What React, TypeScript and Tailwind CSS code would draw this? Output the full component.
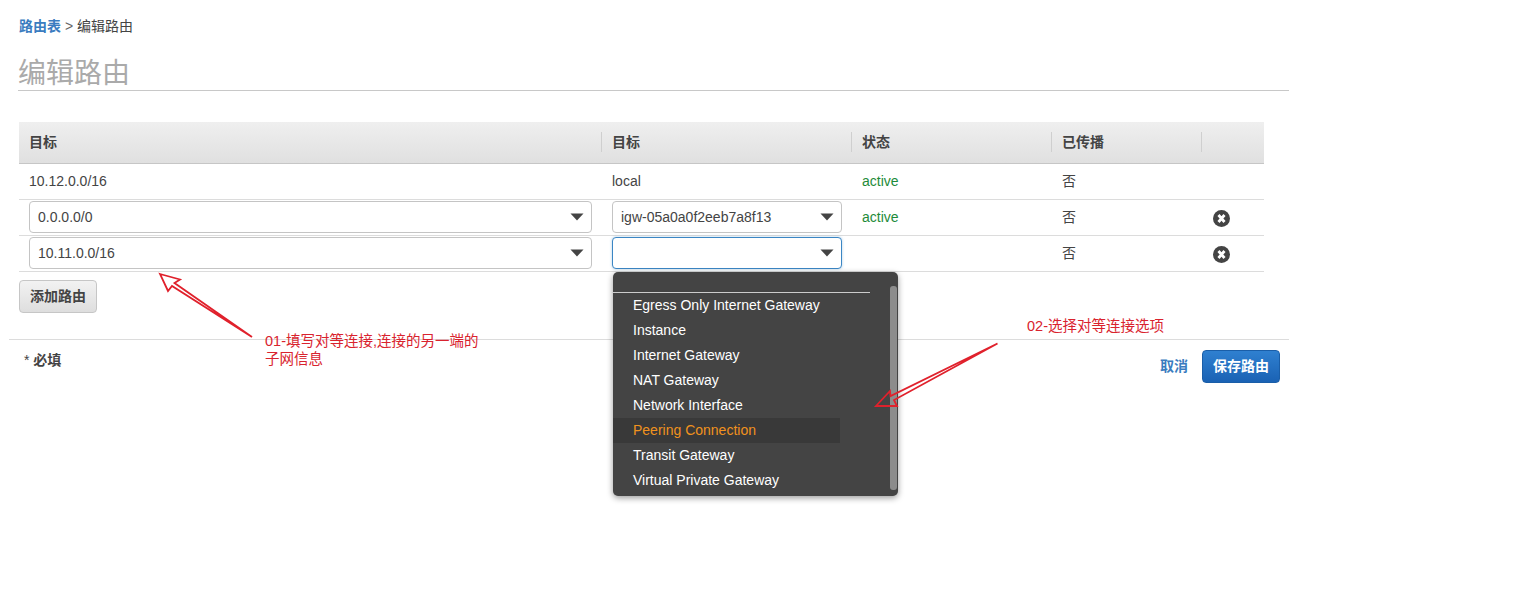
const font = { fontFamily: '"Liberation Sans", "Noto Sans CJK SC", sans-serif' };

const menuItems = [
  "Egress Only Internet Gateway",
  "Instance",
  "Internet Gateway",
  "NAT Gateway",
  "Network Interface",
  "Peering Connection",
  "Transit Gateway",
  "Virtual Private Gateway",
];

function Caret() {
  return (
    <svg width="14" height="8" viewBox="0 0 14 8" className="shrink-0">
      <path d="M0.5 0.5H13.5L7 7.5Z" fill="#444" />
    </svg>
  );
}

function RemoveIcon() {
  return (
    <svg width="17" height="17" viewBox="0 0 17 17">
      <circle cx="8.5" cy="8.5" r="8.5" fill="#444" />
      <path d="M5.5 5L11.5 12M11.5 5L5.5 12" stroke="#fff" strokeWidth="2.8" />
    </svg>
  );
}

function Select({ value, focused, className }: { value?: string; focused?: boolean; className: string }) {
  return (
    <div
      className={`h-[32px] flex items-center justify-between pl-[8px] pr-[7px] rounded-[4px] bg-white border text-[14px] text-[#444] ${
        focused ? "border-[#3b86c4] shadow-[0_0_3px_rgba(59,134,196,0.4)]" : "border-[#c4c4c4]"
      } ${className}`}
    >
      <span className="pt-[2px]">{value}</span>
      <Caret />
    </div>
  );
}

function HeaderCell({ label, divider }: { label?: string; divider?: boolean }) {
  return (
    <div className="h-full flex items-center relative pl-[10px] text-[14px] font-bold text-[#444]">
      {divider && <span className="absolute -left-px top-[10px] h-[20px] w-px bg-[#cfcfcf]" />}
      {label}
    </div>
  );
}

const rowClass =
  "grid grid-cols-[583px_250px_200px_150px_62px] h-[36px] items-center border-b border-[#dcdcdc] text-[14px] text-[#444]";

export default function App() {
  return (
    <div className="relative w-[1533px] h-[589px] overflow-hidden bg-white pl-[19px] pt-[18px]" style={font}>
      {/* Breadcrumb */}
      <div className="h-[17px] leading-[17px] text-[14px] text-[#444]">
        <span className="font-bold text-[#3a7cc0]">路由表</span>
        <span className="text-[#666]"> &gt; </span>
        <span>编辑路由</span>
      </div>

      {/* Title */}
      <h1 className="-ml-px mt-[21px] w-[1271px] h-[35px] leading-[36px] text-[28px] font-normal text-[#aaa] border-b border-[#c8c8c8]">
        编辑路由
      </h1>

      {/* Routes table */}
      <div className="mt-[31px] w-[1245px]">
        <div className="grid grid-cols-[583px_250px_200px_150px_62px] h-[42px] bg-gradient-to-b from-[#efefef] to-[#e0e0e0] border-b border-[#c6c6c6]">
          <HeaderCell label="目标" />
          <HeaderCell label="目标" divider />
          <HeaderCell label="状态" divider />
          <HeaderCell label="已传播" divider />
          <HeaderCell divider />
        </div>

        <div className={rowClass}>
          <div className="pl-[10px]">10.12.0.0/16</div>
          <div className="pl-[10px]">local</div>
          <div className="pl-[10px] text-[#1d8b3a]">active</div>
          <div className="pl-[10px]">否</div>
          <div />
        </div>

        <div className={rowClass}>
          <div className="pl-[10px] pb-[2px]">
            <Select value="0.0.0.0/0" className="w-[563px]" />
          </div>
          <div className="pl-[10px] pb-[2px]">
            <Select value="igw-05a0a0f2eeb7a8f13" className="w-[230px]" />
          </div>
          <div className="pl-[10px] text-[#1d8b3a]">active</div>
          <div className="pl-[10px]">否</div>
          <div className="pl-[11px] flex items-center pt-[2px]">
            <RemoveIcon />
          </div>
        </div>

        <div className={rowClass}>
          <div className="pl-[10px] pb-[2px]">
            <Select value="10.11.0.0/16" className="w-[563px]" />
          </div>
          <div className="pl-[10px] pb-[2px]">
            <Select focused className="w-[230px]" />
          </div>
          <div />
          <div className="pl-[10px]">否</div>
          <div className="pl-[11px] flex items-center pt-[2px]">
            <RemoveIcon />
          </div>
        </div>
      </div>

      <button className="mt-[8px] block w-[78px] h-[33px] rounded-[4px] border border-[#c6c6c6] bg-gradient-to-b from-[#f2f2f2] to-[#dedede] text-[14px] font-bold text-[#444]">
        添加路由
      </button>

      {/* Footer */}
      <div className="-ml-[10px] mt-[26px] w-[1280px] border-t border-[#dcdcdc] flex items-start justify-between pt-[10px] pr-[9px]">
        <div className="pl-[15px] h-[33px] leading-[20px] text-[14px] font-bold text-[#444]">
          <span className="font-normal">* </span>必填
        </div>
        <div className="flex items-center gap-[14px]">
          <span className="text-[14px] font-bold text-[#3a7cc0]">取消</span>
          <button className="w-[78px] h-[33px] rounded-[4px] border border-[#1a5ea8] bg-gradient-to-b from-[#2f80d0] to-[#1a62b4] text-[14px] font-bold text-white">
            保存路由
          </button>
        </div>
      </div>

      {/* Open dropdown menu */}
      <div className="absolute left-[613px] top-[272px] w-[285px] h-[224px] rounded-[5px] bg-[#444] shadow-[0_2px_6px_rgba(0,0,0,0.4)] flex text-[14px] text-white">
        <div className="w-[277px] pt-[20px]">
          <div className="w-[257px] h-px bg-[#ccc]" />
          <div>
            {menuItems.map((item) =>
              item === "Peering Connection" ? (
                <div key={item} className="w-[227px] h-[25px] leading-[25px] pl-[20px] bg-[#393939] text-[#f0921e]">
                  {item}
                </div>
              ) : (
                <div key={item} className="h-[25px] leading-[25px] pl-[20px]">
                  {item}
                </div>
              ),
            )}
          </div>
        </div>
        <div className="mt-[14px] w-[7px] h-[204px] rounded-[3px] bg-[#8c8c8c]" />
      </div>

      {/* Red annotations */}
      <svg className="absolute left-0 top-0 pointer-events-none" width="1533" height="589" fill="none">
        <path d="M160 274L180 279.5L174.5 283L252 337L172 286L168 291Z" stroke="#e0212c" strokeWidth="1.8" />
        <path d="M876 406L890 391L890.5 396L997.5 343.5L894 400L897 406Z" stroke="#e0212c" strokeWidth="1.8" />
      </svg>
      <div className="absolute left-[265px] top-[332px] text-[14.5px] leading-[18px] text-[#d9232e]">
        01-填写对等连接,连接的另一端的
        <br />
        子网信息
      </div>
      <div className="absolute left-[1027px] top-[317px] text-[14.5px] leading-[18px] text-[#d9232e]">
        02-选择对等连接选项
      </div>
    </div>
  );
}
